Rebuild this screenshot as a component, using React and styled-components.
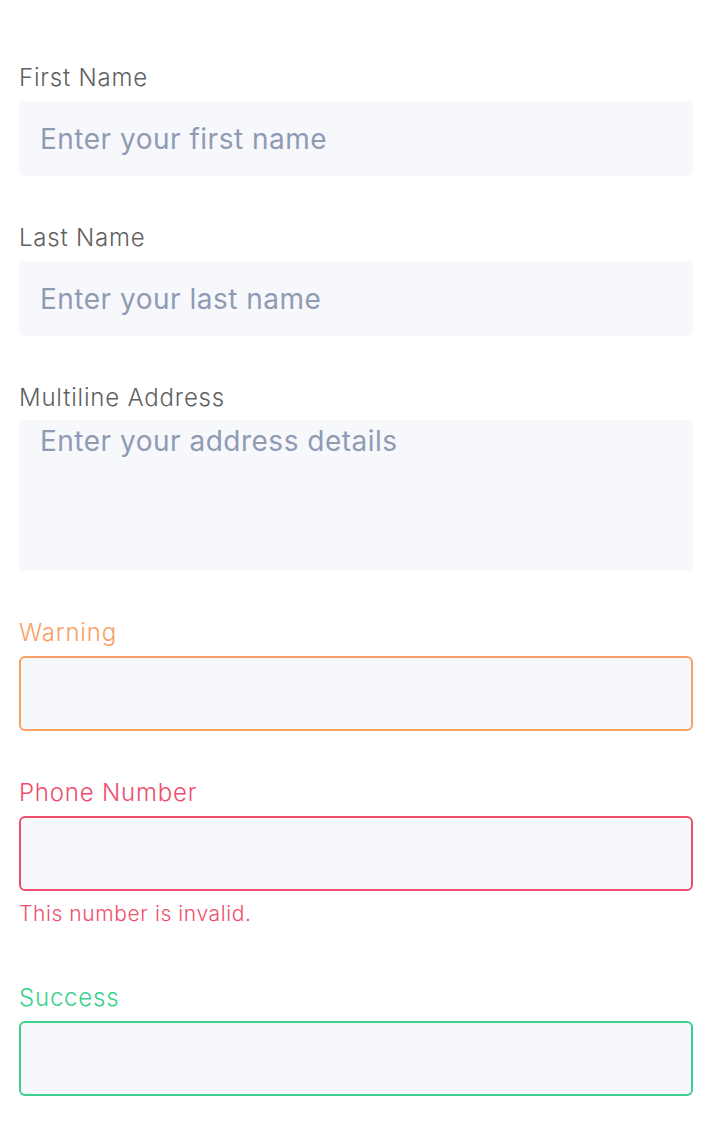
import React from "react";
import styled, { createGlobalStyle } from "styled-components";

const Global = createGlobalStyle`
  html, body { margin: 0; padding: 0; background: #ffffff; }
  body { font-family: Inter, "Noto Sans", sans-serif; }
  * { box-sizing: border-box; }
`;

const colors = {
  basic: "#5f5f5f",
  warning: "#F9A064",
  danger: "#EE4D6C",
  success: "#3AD08E",
};

const Form = styled.form`
  display: flex;
  flex-direction: column;
  gap: 47px;
  padding: 63px 19px 40px;
`;

const Field = styled.div`
  display: flex;
  flex-direction: column;
`;

const Label = styled.label`
  font-size: 24px;
  line-height: 30px;
  font-weight: 300;
  letter-spacing: 0.8px;
  color: ${(p) => colors[p.$status || "basic"]};
  margin-bottom: ${(p) => (p.$tight ? "7px" : "8px")};
`;

const Input = styled.input`
  height: 75px;
  width: 100%;
  border-radius: 6px;
  background: #f7f8fc;
  border: 2px solid ${(p) => (p.$status ? colors[p.$status] : "#f7f8fc")};
  padding: 0 19px;
  font-family: Inter, "Noto Sans", sans-serif;
  font-size: 28px;
  letter-spacing: 0.5px;
  color: #222b45;
  outline: none;
  &::placeholder { color: #8f9bb3; }
`;

const TextArea = styled.textarea`
  height: 151px;
  width: 100%;
  border-radius: 6px;
  background: #f7f8fc;
  border: 2px solid #f7f8fc;
  padding: 0 19px;
  font-family: Inter, "Noto Sans", sans-serif;
  font-size: 28px;
  letter-spacing: 0.5px;
  line-height: 38px;
  color: #222b45;
  outline: none;
  resize: none;
  &::placeholder { color: #8f9bb3; }
`;

const Caption = styled.div`
  font-size: 21px;
  line-height: 24px;
  font-weight: 300;
  letter-spacing: 0.6px;
  margin-top: 11px;
  margin-bottom: 10px;
  color: ${(p) => colors[p.$status]};
`;

export default function App() {
  return (
    <>
      <Global />
      <Form onSubmit={(e) => e.preventDefault()}>
        <Field>
          <Label>First Name</Label>
          <Input placeholder="Enter your first name" />
        </Field>
        <Field>
          <Label>Last Name</Label>
          <Input placeholder="Enter your last name" />
        </Field>
        <Field>
          <Label $tight>Multiline Address</Label>
          <TextArea placeholder="Enter your address details" />
        </Field>
        <Field>
          <Label $status="warning">Warning</Label>
          <Input $status="warning" />
        </Field>
        <Field>
          <Label $status="danger">Phone Number</Label>
          <Input $status="danger" />
          <Caption $status="danger">This number is invalid.</Caption>
        </Field>
        <Field>
          <Label $status="success">Success</Label>
          <Input $status="success" />
        </Field>
      </Form>
    </>
  );
}
